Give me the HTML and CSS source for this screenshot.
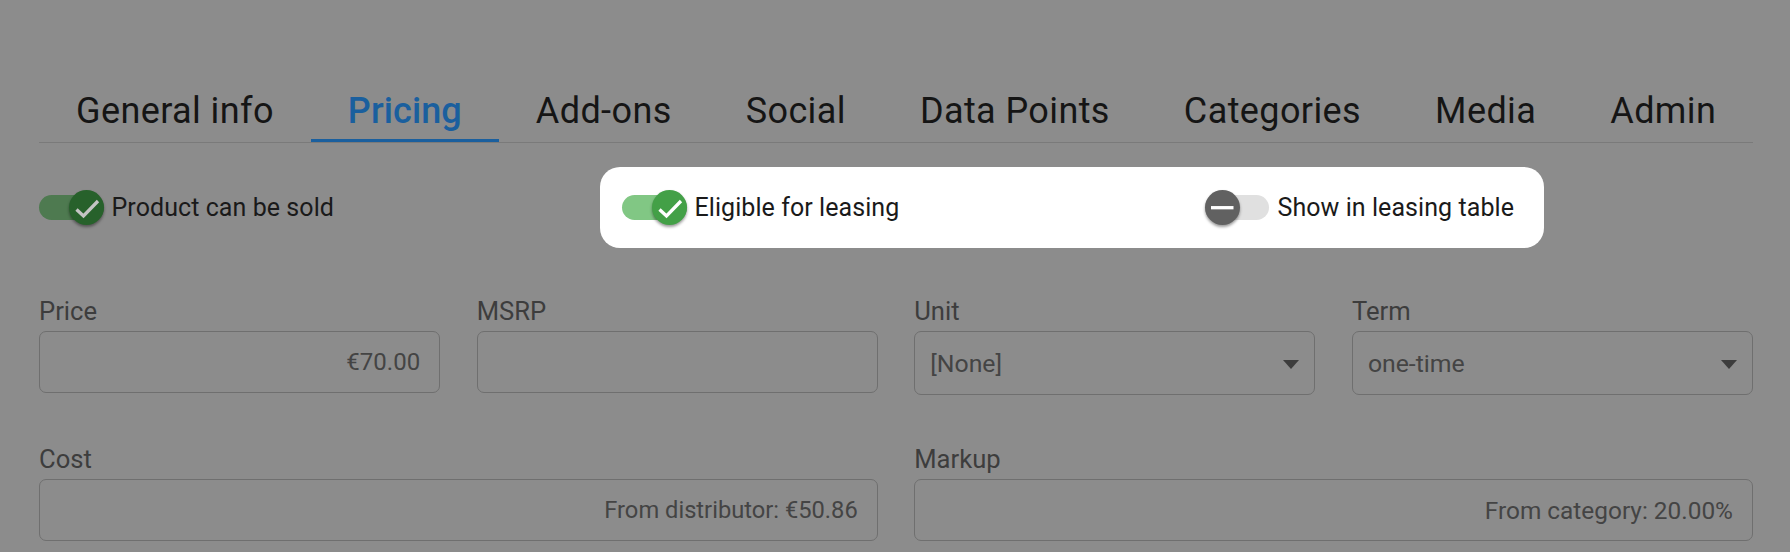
FILE: index.html
```html
<!DOCTYPE html>
<html lang="en">
<head>
<meta charset="utf-8">
<title>Pricing</title>
<link rel="stylesheet" href="styles.css">
</head>
<body>
<div class="page">
  <nav class="tabs">
    <span class="tab">General info</span>
    <span class="tab active">Pricing</span>
    <span class="tab">Add-ons</span>
    <span class="tab">Social</span>
    <span class="tab">Data Points</span>
    <span class="tab">Categories</span>
    <span class="tab">Media</span>
    <span class="tab">Admin</span>
  </nav>
  <div class="switches">
    <label class="switch-row first">
      <span class="switch on">
        <span class="track"></span>
        <span class="thumb"><svg viewBox="0 0 35 35"><path d="M7.5 19.5l7 6.5L29 11"/></svg></span>
      </span>
      <span class="label">Product can be sold</span>
    </label>
    <div class="highlight">
      <label class="switch-row">
        <span class="switch on">
          <span class="track"></span>
          <span class="thumb"><svg viewBox="0 0 35 35"><path d="M7.5 19.5l7 6.5L29 11"/></svg></span>
        </span>
        <span class="label">Eligible for leasing</span>
      </label>
      <label class="switch-row">
        <span class="switch off">
          <span class="track"></span>
          <span class="thumb"><svg viewBox="0 0 35 35"><path d="M6 17.7h22.5"/></svg></span>
        </span>
        <span class="label">Show in leasing table</span>
      </label>
    </div>
  </div>
  <div class="form">
    <div class="field"><span class="caption">Price</span><div class="box end">€70.00</div></div>
    <div class="field"><span class="caption">MSRP</span><div class="box end"></div></div>
    <div class="field"><span class="caption">Unit</span><div class="box select">[None]<i class="caret"></i></div></div>
    <div class="field"><span class="caption">Term</span><div class="box select">one-time<i class="caret"></i></div></div>
    <div class="field wide"><span class="caption">Cost</span><div class="box end distributor">From distributor: €50.86</div></div>
    <div class="field wide"><span class="caption">Markup</span><div class="box end category">From category: 20.00%</div></div>
  </div>
</div>
</body>
</html>
```
FILE: styles.css
```css
* { box-sizing: border-box; }
html, body { margin: 0; height: 100%; }
body {
  background: #8c8c8c;
  font-family: Roboto, "Liberation Sans", sans-serif;
  color: #111;
  overflow: hidden;
}
.page { padding: 80px 37px 0 39px; }
.tabs {
  display: flex;
  border-bottom: 1px solid #7a7a7a;
  height: 63px;
}
.tab {
  padding: 10px 37px 0;
  font-size: 36px;
  line-height: 42px;
  height: 62px;
  letter-spacing: 0.4px;
  color: #151515;
  white-space: nowrap;
}
.tab.active { color: #1a5f9e; border-bottom: 3px solid #1a5f9e; font-weight: 500; letter-spacing: 0.1px; }
.switches {
  display: flex;
  align-items: center;
  margin-top: 24px;
  height: 81px;
}
.switch-row { display: flex; align-items: center; }
.first { width: 560.5px; }
.highlight {
  display: flex;
  justify-content: space-between;
  align-items: center;
  width: 944px;
  height: 81px;
  padding: 0 29.5px 0 22.5px;
  background: #fff;
  border-radius: 20px;
}
.switch { position: relative; width: 64.5px; height: 36px; margin-right: 8px; flex: none; }
.track { position: absolute; left: 0; right: 0; top: 5.5px; height: 25px; border-radius: 12.5px; }
.thumb {
  position: absolute;
  top: 0;
  width: 35px;
  height: 35px;
  border-radius: 50%;
  box-shadow: 0 2px 3px rgba(0,0,0,.4);
}
.thumb svg { display: block; width: 35px; height: 35px; }
.thumb path { fill: none; stroke: #fff; stroke-width: 3.3; }
.on .thumb { right: 0; background: #43a047; }
.on .track { background: #81c784; }
.off .thumb { left: 0; background: #616161; }
.off .track { background: #e0e0e0; }
.first .on .thumb { background: #27612b; }
.first .on .track { background: #4e7a50; }
.first .thumb path { stroke: #c4c4c4; }
.label { font-size: 25px; letter-spacing: 0.07px; color: #1a1a1a; white-space: nowrap; }
.form {
  display: grid;
  grid-template-columns: repeat(4, 1fr);
  column-gap: 36.5px;
  row-gap: 48px;
  margin-top: 47px;
}
.field.wide { grid-column: span 2; }
.caption { display: block; font-size: 25.6px; line-height: 32px; color: #3d3d3d; margin-bottom: 4px; }
.box {
  height: 62px;
  border: 1px solid #6f6f6f;
  border-radius: 7px;
  font-size: 24px;
  color: #444;
  display: flex;
  align-items: center;
  padding: 0 19px 0 15px;
}
.end { justify-content: flex-end; }
.select { justify-content: space-between; height: 64px; font-size: 24.8px; padding-right: 15px; }
.distributor { font-size: 23.7px; }
.category { font-size: 24.4px; }
.caret { width: 0; height: 0; border-left: 8px solid transparent; border-right: 8px solid transparent; border-top: 9px solid #3d3d3d; margin-top: 3px; }
```
